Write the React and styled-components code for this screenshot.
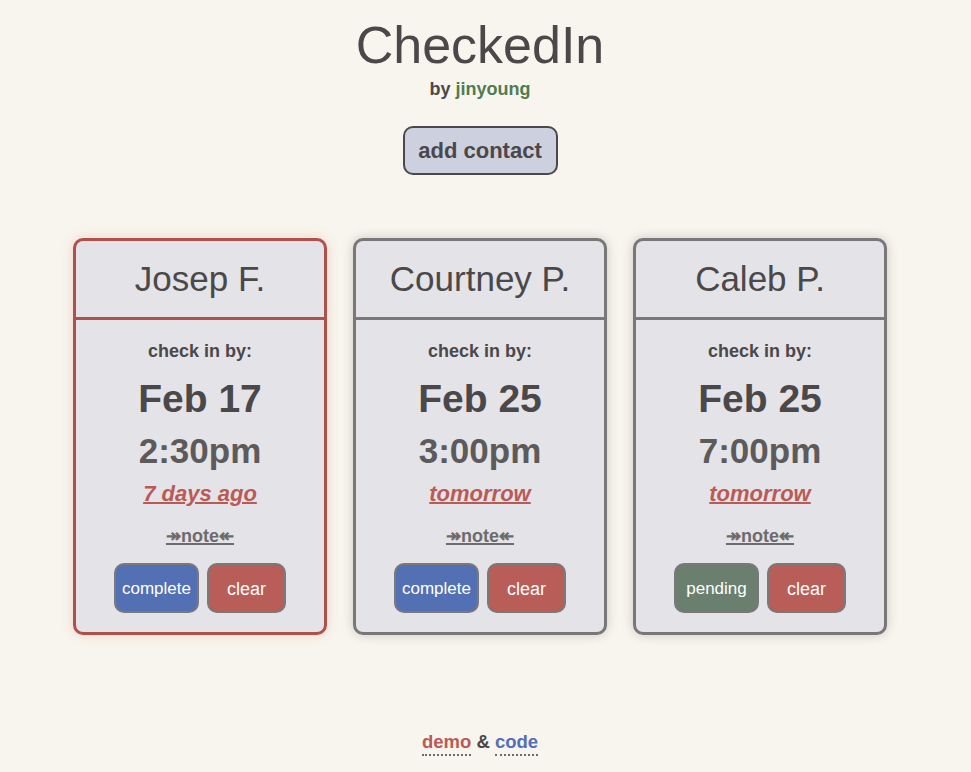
import React from "react";
import styled, { createGlobalStyle } from "styled-components";

const GlobalStyle = createGlobalStyle`
  body {
    margin: 0;
    background: #f8f5ee;
    font-family: "Liberation Sans", Arial, sans-serif;
    color: #4a4848;
  }
`;

const Page = styled.div`
  width: 960px;
  min-height: 772px;
  display: flex;
  flex-direction: column;
  align-items: center;
`;

const Title = styled.h1`
  margin: 14px 0 0;
  font-size: 52px;
  font-weight: normal;
  line-height: 62px;
  color: #4a4848;
`;

const Byline = styled.p`
  margin: 2px 0 0;
  font-size: 18px;
  font-weight: bold;
  line-height: 22px;
`;

const Green = styled.span`
  color: #4f7b51;
`;

const AddButton = styled.button`
  margin-top: 26px;
  width: 155px;
  height: 49px;
  background: #cdd0de;
  border: 2px solid #4a4848;
  border-radius: 10px;
  font-family: inherit;
  font-size: 22px;
  font-weight: bold;
  color: #4a4848;
  padding: 0;
`;

const CardRow = styled.div`
  display: flex;
  gap: 26px;
  margin-top: 63px;
`;

const Card = styled.div`
  width: 254px;
  height: 397px;
  box-sizing: border-box;
  background: #e3e3e8;
  border: 3px solid ${(p) => (p.$late ? "#b0504d" : "#797777")};
  border-radius: 10px;
  box-shadow: 0 0 12px ${(p) => (p.$late ? "rgba(200,120,80,0.25)" : "rgba(0,0,0,0.18)")};
  display: flex;
  flex-direction: column;
`;

const CardHead = styled.div`
  height: 79px;
  box-sizing: border-box;
  display: flex;
  align-items: center;
  justify-content: center;
  border-bottom: 3px solid ${(p) => (p.$late ? "#b0504d" : "#797777")};
  font-size: 35px;
  color: #4a4848;
`;

const CardBody = styled.div`
  display: flex;
  flex-direction: column;
  align-items: center;
  padding-top: 21px;
`;

const Label = styled.div`
  font-size: 18px;
  font-weight: bold;
  line-height: 20px;
`;

const DateText = styled.div`
  margin-top: 16px;
  font-size: 39px;
  font-weight: bold;
  line-height: 44px;
  color: #4a4848;
`;

const TimeText = styled.div`
  margin-top: 10px;
  font-size: 35px;
  font-weight: bold;
  line-height: 40px;
  color: #5c5a5a;
`;

const Relative = styled.a`
  margin-top: 10px;
  font-size: 22px;
  font-weight: bold;
  font-style: italic;
  line-height: 26px;
  color: #bb5a55;
  text-decoration: underline;
  text-decoration-thickness: 2px;
`;

const Note = styled.a`
  margin-top: 18px;
  font-size: 18px;
  font-weight: bold;
  line-height: 22px;
  color: #6d6b6b;
  text-decoration: underline;
  text-decoration-thickness: 2px;
`;

const Actions = styled.div`
  display: flex;
  gap: 8px;
  margin-top: 16px;
`;

const colors = {
  complete: "#5470b5",
  pending: "#6a7f6e",
  clear: "#b95d58",
};

const ActionButton = styled.button`
  height: 50px;
  width: ${(p) => (p.$kind === "clear" ? "79px" : "85px")};
  background: ${(p) => colors[p.$kind]};
  border: 2px solid #7a7878;
  border-radius: 10px;
  color: #fff;
  font-family: inherit;
  font-size: ${(p) => (p.$kind === "clear" ? "18px" : "17px")};
  padding: 2px 0 0;
`;

const Footer = styled.div`
  margin-top: auto;
  margin-bottom: 19px;
  font-size: 18.5px;
  font-weight: bold;
`;

const FootLink = styled.a`
  color: ${(p) => p.$color};
  text-decoration: none;
  border-bottom: 2px dotted #6d6b6b;
  padding-bottom: 2px;
`;

const contacts = [
  { name: "Josep F.", date: "Feb 17", time: "2:30pm", rel: "7 days ago", status: "complete", late: true },
  { name: "Courtney P.", date: "Feb 25", time: "3:00pm", rel: "tomorrow", status: "complete" },
  { name: "Caleb P.", date: "Feb 25", time: "7:00pm", rel: "tomorrow", status: "pending" },
];

export default function App() {
  return (
    <>
      <GlobalStyle />
      <Page>
        <Title>CheckedIn</Title>
        <Byline>
          by <Green>jinyoung</Green>
        </Byline>
        <AddButton>add contact</AddButton>
        <CardRow>
          {contacts.map((c) => (
            <Card key={c.name} $late={c.late}>
              <CardHead $late={c.late}>{c.name}</CardHead>
              <CardBody>
                <Label>check in by:</Label>
                <DateText>{c.date}</DateText>
                <TimeText>{c.time}</TimeText>
                <Relative>{c.rel}</Relative>
                <Note>↠note↞</Note>
                <Actions>
                  <ActionButton $kind={c.status}>{c.status}</ActionButton>
                  <ActionButton $kind="clear">clear</ActionButton>
                </Actions>
              </CardBody>
            </Card>
          ))}
        </CardRow>
        <Footer>
          <FootLink $color="#bb5a55">demo</FootLink> &amp;{" "}
          <FootLink $color="#5470b5">code</FootLink>
        </Footer>
      </Page>
    </>
  );
}
